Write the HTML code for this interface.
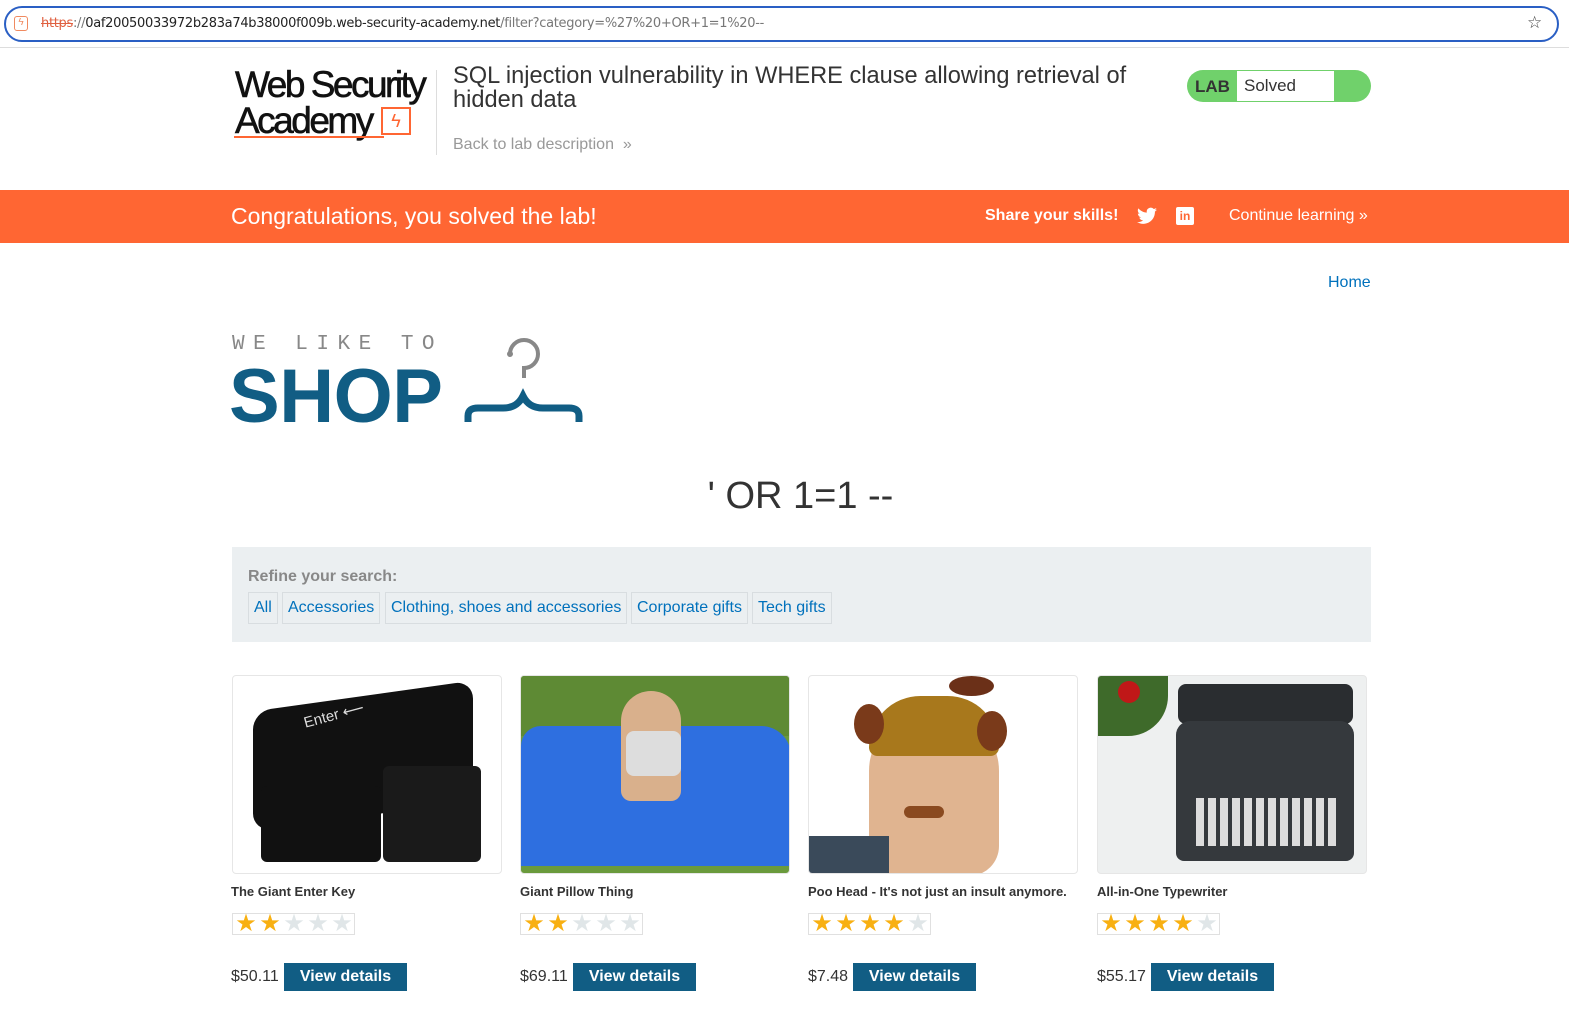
<!DOCTYPE html>
<html><head><meta charset="utf-8"><style>
*{box-sizing:border-box;margin:0;padding:0}
body{width:1569px;height:1011px;overflow:hidden;background:#fff;font-family:"Liberation Sans",sans-serif;color:#333;position:relative}
.abs{position:absolute}
.urlbar{left:4px;top:6px;width:1555px;height:36px;border:2px solid #2a5fc4;border-radius:18px;background:#fff}
.url{left:41px;top:16px;font-family:"DejaVu Sans",sans-serif;font-size:13px;color:#222;letter-spacing:-0.3px}
.banner{left:0;top:190px;width:1569px;height:53px;background:#ff6633}
.card{border:1px solid #e6e6e6;border-radius:4px;width:270px;height:199px;overflow:hidden}
.name{font-size:13px;font-weight:bold;color:#333}
.stars{width:123px;height:22px;border:1px solid #e0e0e0;display:flex;align-items:center;padding-left:1px}
.stars span{font-size:24px;line-height:22px;width:25px;text-align:center}
.on{color:#f8b012}.off{color:#e0e6e8}
.price{font-size:16px;color:#333}
.btn{background:#115d84;color:#fff;font-weight:bold;font-size:16px;height:28px;line-height:28px;text-align:center}
.cat{border:1px solid #d8dde0;height:32px;line-height:30px;padding:0 5px;color:#0071bc;font-size:16px;top:592px}
</style></head><body>
<div class="abs" style="left:0;top:0;width:1569px;height:48px;background:#fff;border-bottom:1px solid #ddd"></div>
<div class="abs urlbar"></div>
<div class="abs" style="left:14px;top:16px;width:14px;height:15px;border:1.5px solid #f08a60;border-radius:3px;color:#f08a60;font-size:10px;text-align:center;line-height:12px">ϟ</div>
<div class="abs url"><span style="color:#e06040;text-decoration:line-through">https</span><span style="color:#777">://</span>0af20050033972b283a74b38000f009b.web-security-academy.net<span style="color:#777">/filter?category=%27%20+OR+1=1%20--</span></div>
<div class="abs" style="left:1527px;top:13px;font-size:17px;color:#444">☆</div>

<div class="abs" style="left:235px;top:67px;font-size:37px;letter-spacing:-2.5px;color:#111;line-height:36px;-webkit-text-stroke:0.6px #111">Web Security<br>Academy</div>
<div class="abs" style="left:234px;top:136px;width:150px;height:2px;background:#ff6633"></div>
<div class="abs" style="left:381px;top:107px;width:30px;height:28px;border:2px solid #ff6633;color:#ff6633;font-size:18px;text-align:center;line-height:24px">ϟ</div>
<div class="abs" style="left:436px;top:70px;width:1px;height:85px;background:#ddd"></div>
<div class="abs" style="left:453px;top:64px;font-size:23.6px;line-height:24px;color:#333;width:720px">SQL injection vulnerability in WHERE clause allowing retrieval of hidden data</div>
<div class="abs" style="left:453px;top:136px;font-size:16px;color:#999">Back to lab description &nbsp;»</div>
<div class="abs" style="left:1187px;top:70px;width:184px;height:32px;border-radius:16px;background:#70d16b"></div>
<div class="abs" style="left:1237px;top:71px;width:97px;height:30px;background:#fff"></div>
<div class="abs" style="left:1195px;top:77px;font-size:17px;font-weight:bold;color:#333">LAB</div>
<div class="abs" style="left:1244px;top:76px;font-size:17px;color:#333">Solved</div>

<div class="abs banner"></div>
<div class="abs" style="left:231px;top:203px;font-size:23px;color:#fff">Congratulations, you solved the lab!</div>
<div class="abs" style="left:985px;top:207px;font-size:16px;font-weight:bold;color:#fff">Share your skills!</div>
<svg class="abs" style="left:1137px;top:207px" width="20" height="18" viewBox="0 0 24 20"><path fill="#fff" d="M24 2.4a10 10 0 0 1-2.8.8A5 5 0 0 0 23.3.4a10 10 0 0 1-3.1 1.2A4.9 4.9 0 0 0 11.8 6 14 14 0 0 1 1.7.9a4.9 4.9 0 0 0 1.5 6.6A4.9 4.9 0 0 1 1 6.9a4.9 4.9 0 0 0 3.9 4.8 5 5 0 0 1-2.2.1 4.9 4.9 0 0 0 4.6 3.4A9.9 9.9 0 0 1 0 17.2 14 14 0 0 0 7.5 19.4c9.1 0 14-7.5 14-14v-.6A10 10 0 0 0 24 2.4z"/></svg>
<div class="abs" style="left:1176px;top:207px;width:18px;height:18px;background:#fff;border-radius:2px;color:#ff6633;font-size:12px;font-weight:bold;text-align:center;line-height:19px">in</div>
<div class="abs" style="left:1229px;top:207px;font-size:16px;color:#fff">Continue learning »</div>

<div class="abs" style="left:1328px;top:274px;font-size:16px;color:#0071bc">Home</div>

<div class="abs" style="left:232px;top:333px;font-family:'Liberation Mono',monospace;font-size:21px;letter-spacing:8.5px;color:#888">WE LIKE TO</div>
<div class="abs" style="left:229px;top:353px;font-size:76px;font-weight:bold;color:#115d84;letter-spacing:-0.5px">SHOP</div>
<svg class="abs" style="left:462px;top:332px" width="125" height="95" viewBox="0 0 125 95">
<path d="M48 22a14 14 0 1 1 14 14v10" fill="none" stroke="#888" stroke-width="4"/><circle cx="48" cy="22" r="3" fill="#888"/>
<path d="M6 90v-6c0-6 4-8 10-8h25c10 0 16-4 20-12 4 8 10 12 20 12h26c6 0 10 2 10 8v6" fill="none" stroke="#115d84" stroke-width="7"/>
</svg>

<div class="abs" style="left:0;width:1569px;top:475px;text-align:center;font-size:38px;color:#333;padding-left:32px">' OR 1=1 --</div>

<div class="abs" style="left:232px;top:547px;width:1139px;height:95px;background:#ebeff1"></div>
<div class="abs" style="left:248px;top:568px;font-size:16px;font-weight:bold;color:#888">Refine your search:</div>
<div class="abs cat" style="left:248px">All</div>
<div class="abs cat" style="left:282px">Accessories</div>
<div class="abs cat" style="left:385px">Clothing, shoes and accessories</div>
<div class="abs cat" style="left:631px">Corporate gifts</div>
<div class="abs cat" style="left:752px">Tech gifts</div>

<div class="abs card" style="left:232px;top:675px;background:#fff">
<div class="abs" style="left:20px;top:20px;width:220px;height:120px;background:#111;border-radius:18px;transform:skewY(-8deg)"></div>
<div class="abs" style="left:28px;top:110px;width:120px;height:76px;background:#111;border-radius:6px"></div>
<div class="abs" style="left:150px;top:90px;width:98px;height:96px;background:#1a1a1a;border-radius:6px"></div>
<div class="abs" style="left:70px;top:30px;color:#ddd;font-size:15px;transform:rotate(-15deg)">Enter ⟵</div>
</div>
<div class="abs card" style="left:520px;top:675px;background:#6a9a3c">
<div class="abs" style="left:0;top:0;width:270px;height:60px;background:#5e8a34"></div>
<div class="abs" style="left:0;top:50px;width:270px;height:140px;background:#2e6fe0;border-radius:20px 30px 0 0"></div>
<div class="abs" style="left:100px;top:15px;width:60px;height:110px;background:#d9b08c;border-radius:30px 30px 10px 10px"></div>
<div class="abs" style="left:105px;top:55px;width:55px;height:45px;background:#ddd;border-radius:8px"></div>
</div>
<div class="abs card" style="left:808px;top:675px;background:#fff">
<div class="abs" style="left:60px;top:35px;width:130px;height:165px;background:#e0b490;border-radius:60px 60px 30px 30px"></div>
<div class="abs" style="left:60px;top:20px;width:130px;height:60px;background:#a8781c;border-radius:60px 60px 10px 10px"></div>
<div class="abs" style="left:45px;top:28px;width:30px;height:40px;background:#7a3a1a;border-radius:50%"></div>
<div class="abs" style="left:168px;top:35px;width:30px;height:40px;background:#7a3a1a;border-radius:50%"></div>
<div class="abs" style="left:140px;top:0;width:45px;height:20px;background:#6b3018;border-radius:50%"></div>
<div class="abs" style="left:0;top:160px;width:80px;height:40px;background:#3a4a5a"></div>
<div class="abs" style="left:95px;top:130px;width:40px;height:12px;background:#8a4a20;border-radius:6px"></div>
</div>
<div class="abs card" style="left:1097px;top:675px;background:#eef0f0">
<div class="abs" style="left:0;top:0;width:70px;height:60px;background:#3e6a2a;border-radius:0 0 40px 0"></div>
<div class="abs" style="left:20px;top:5px;width:22px;height:22px;background:#c01818;border-radius:50%"></div>
<div class="abs" style="left:80px;top:8px;width:175px;height:40px;background:#2a2d30;border-radius:8px"></div>
<div class="abs" style="left:78px;top:45px;width:178px;height:140px;background:#35393d;border-radius:14px 14px 8px 8px"></div>
<div class="abs" style="left:98px;top:122px;width:140px;height:48px;background:repeating-linear-gradient(90deg,#ddd 0 8px,#35393d 8px 12px)"></div>
</div>

<div class="abs name" style="left:231px;top:884px">The Giant Enter Key</div>
<div class="abs name" style="left:520px;top:884px">Giant Pillow Thing</div>
<div class="abs name" style="left:808px;top:884px">Poo Head - It's not just an insult anymore.</div>
<div class="abs name" style="left:1097px;top:884px">All-in-One Typewriter</div>

<div class="abs stars" style="left:232px;top:913px"><span class="on">★</span><span class="on">★</span><span class="off">★</span><span class="off">★</span><span class="off">★</span></div>
<div class="abs stars" style="left:520px;top:913px"><span class="on">★</span><span class="on">★</span><span class="off">★</span><span class="off">★</span><span class="off">★</span></div>
<div class="abs stars" style="left:808px;top:913px"><span class="on">★</span><span class="on">★</span><span class="on">★</span><span class="on">★</span><span class="off">★</span></div>
<div class="abs stars" style="left:1097px;top:913px"><span class="on">★</span><span class="on">★</span><span class="on">★</span><span class="on">★</span><span class="off">★</span></div>

<div class="abs price" style="left:231px;top:968px">$50.11</div>
<div class="abs btn" style="left:284px;top:963px;width:123px">View details</div>
<div class="abs price" style="left:520px;top:968px">$69.11</div>
<div class="abs btn" style="left:573px;top:963px;width:123px">View details</div>
<div class="abs price" style="left:808px;top:968px">$7.48</div>
<div class="abs btn" style="left:853px;top:963px;width:123px">View details</div>
<div class="abs price" style="left:1097px;top:968px">$55.17</div>
<div class="abs btn" style="left:1151px;top:963px;width:123px">View details</div>
</body></html>
